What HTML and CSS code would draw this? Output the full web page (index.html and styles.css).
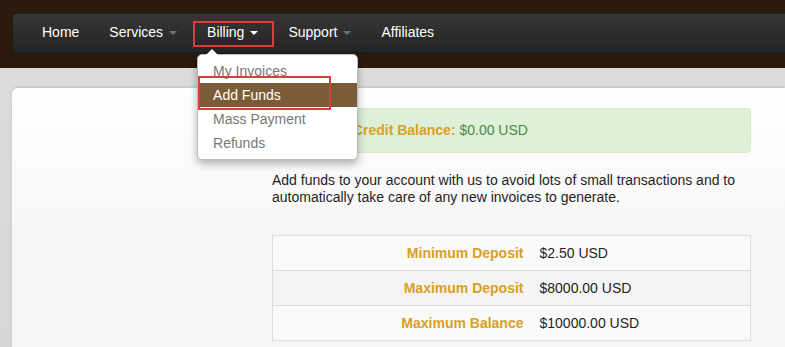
FILE: index.html
```html
<!DOCTYPE HTML>
<html>
	<head>
		<title>Add Funds</title>
		<meta charset="utf-8">
		<link rel="stylesheet" href="styles.css">
	</head>
	<body>
		<div class="topbar">
			<div class="navbar">
				<ul class="nav">
					<li><a href="#">Home</a></li>
					<li><a href="#">Services<b class="caret"></b></a></li>
					<li class="open">
						<a href="#" class="marked">Billing<b class="caret"></b></a>
						<ul class="dropdown">
							<li><a href="#">My Invoices</a></li>
							<li class="active"><a href="#">Add Funds</a></li>
							<li><a href="#">Mass Payment</a></li>
							<li><a href="#">Refunds</a></li>
						</ul>
					</li>
					<li><a href="#">Support<b class="caret"></b></a></li>
					<li><a href="#">Affiliates</a></li>
				</ul>
			</div>
		</div>
		<div class="page">
			<div class="panel">
				<div class="sidebar"></div>
				<div class="content">
					<div class="alert"><strong>Available Credit Balance:</strong> $0.00 USD</div>
					<p class="intro">Add funds to your account with us to avoid lots of small transactions and to automatically take care of any new invoices to generate.</p>
					<table class="limits">
						<tr><th>Minimum Deposit</th><td>$2.50 USD</td></tr>
						<tr><th>Maximum Deposit</th><td>$8000.00 USD</td></tr>
						<tr><th>Maximum Balance</th><td>$10000.00 USD</td></tr>
					</table>
				</div>
			</div>
		</div>
	</body>
</html>
```

FILE: styles.css
```css
*{ margin:0; padding:0; box-sizing:border-box; }
body{ background:#dadada; font-family:"Liberation Sans", Arial, sans-serif; font-size:14px; color:#222; }
a{ text-decoration:none; }

.topbar{ background:#2a190d; padding:13px 0 15px 12px; }
.navbar{ height:40px; background:linear-gradient(#363636,#242424); border:1px solid #1c1c1c; border-right:0; border-radius:4px 0 0 4px; padding-left:14px; }
.nav{ list-style:none; display:flex; height:38px; }
.nav > li{ position:relative; }
.nav > li > a{ display:block; line-height:37px; padding:0 15px; color:#fff; }
.caret{ display:inline-block; width:0; height:0; margin-left:6px; vertical-align:middle; border-top:4px solid #6f6f6f; border-left:4px solid transparent; border-right:4px solid transparent; }
.open .caret{ border-top-color:#fff; }
.marked::after{ content:""; position:absolute; left:1px; right:-1px; top:7px; bottom:5px; border:2px solid #e03a3a; }

.dropdown{ position:absolute; left:5px; top:40px; width:161px; list-style:none; background:#fff; border:1px solid #bdbdbd; border-radius:5px; padding:4px 0; box-shadow:0 4px 9px rgba(0,0,0,.3); z-index:5; }
.dropdown::before{ content:""; position:absolute; left:8px; top:-6px; border-bottom:6px solid #fff; border-left:6px solid transparent; border-right:6px solid transparent; }
.dropdown li a{ display:block; line-height:24px; padding:0 15px; color:#777; }
.dropdown li.active a{ background:#7b5c39; color:#fff; position:relative; }
.dropdown li.active a::after{ content:""; position:absolute; left:0; top:-7px; width:129px; bottom:-3px; border:2px solid #e03a3a; }

.page{ padding:20px 0 0 12px; background:linear-gradient(#dcdcdc,#d6d6d6); }
.panel{ display:grid; grid-template-columns:260px 479px; min-height:259px; background:linear-gradient(#fff,#f6f6f6 60%); border-radius:6px 0 0 0; box-shadow:0 -1px 3px rgba(0,0,0,.12); padding-top:20px; }

.alert{ height:45px; padding:0 15px; line-height:43px; background:#dff0d8; border:1px solid #d6e9c6; border-radius:4px; color:#4a8a3e; }
.alert strong{ color:#d8a025; }
.intro{ margin:19px 0 29px; line-height:17px; color:#1f1f1f; }

.limits{ width:100%; border-collapse:collapse; border:1px solid #dedede; box-shadow:inset 1px 1px 0 #f2f2f2; }
.limits tr{ height:35px; border-top:1px solid #dcdcdc; }
.limits tr:nth-child(2){ background:#f4f4f4; }
.limits tr:nth-child(odd){ background:#fafafa; }
.limits th{ width:259px; text-align:right; padding:0 8px; color:#d8a025; }
.limits td{ padding:0 8px; color:#1f1f1f; }
```
